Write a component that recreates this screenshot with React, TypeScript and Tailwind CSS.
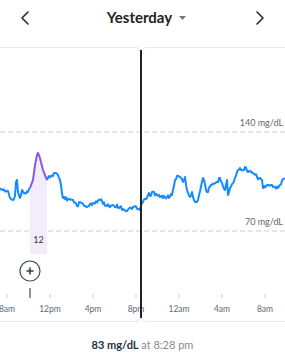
import React from "react";

const blue1: [number, number][] = [[0,188],[3,190],[8,191],[10,198],[13,200],[15,196],[16,182],[17,180],[18,192],[20,198],[22,190],[25,193],[28,192],[30,188]];
const purple: [number, number][] = [[30,188],[33,180],[35,165],[37,155],[38,153],[40,158],[43,170],[47,180]];
const blue2: [number, number][] = [[47,180],[49,176],[53,176],[55,173],[58,175],[60,180],[63,198],[73,200],[77,206],[80,202],[83,204],[87,207],[93,203],[100,200],[107,206],[113,205],[120,207],[127,211],[133,207],[140,210],[143,202],[147,198],[149,193],[150,196],[152,192],[157,195],[160,197],[167,197],[172,195],[175,180],[177,176],[180,177],[183,182],[185,177],[187,190],[190,197],[192,192],[195,202],[198,200],[202,182],[203,178],[207,192],[212,185],[217,182],[220,178],[222,183],[225,190],[227,180],[228,195],[230,188],[233,183],[237,172],[240,168],[243,170],[245,167],[248,172],[253,173],[257,177],[262,180],[263,188],[267,185],[273,187],[278,188],[283,179],[285,178]];

function jit(x: number) {
  const s = Math.sin(x * 12.9898 + 78.233) * 43758.5453;
  return (s - Math.floor(s)) * 2 - 1;
}

function build(keys: [number, number][], amp: number) {
  const pts: [number, number][] = [];
  for (let i = 0; i < keys.length - 1; i++) {
    const [x0, y0] = keys[i];
    const [x1, y1] = keys[i + 1];
    const steps = Math.max(1, Math.round((x1 - x0) / 1));
    for (let s = 0; s < steps; s++) {
      const t = s / steps;
      const x = x0 + (x1 - x0) * t;
      let y = y0 + (y1 - y0) * t;
      if (s !== 0) y += jit(x) * amp;
      pts.push([x, y]);
    }
  }
  pts.push(keys[keys.length - 1]);
  return pts;
}

const toD = (pts: [number, number][]) =>
  pts.map((p, i) => `${i === 0 ? "M" : "L"}${p[0].toFixed(1)},${p[1].toFixed(1)}`).join(" ");

const b1 = build(blue1, 1.5);
const pu = build(purple, 0.4);
const b2 = build(blue2, 1.8);

const ticks = [
  { x: 7, l: "8am" },
  { x: 50, l: "12pm" },
  { x: 93, l: "4pm" },
  { x: 136, l: "8pm" },
  { x: 179, l: "12am" },
  { x: 222, l: "4am" },
  { x: 265, l: "8am" },
];

export default function App() {
  const shade = toD(pu) + " L47,254 L30,254 Z";
  return (
    <div className="w-[285px] h-[354px] bg-white overflow-hidden flex flex-col" style={{ fontFamily: "Lato, 'Noto Sans', sans-serif" }}>
      <div className="h-[47px] flex items-center justify-between px-[19px] pb-[12px] shrink-0">
        <svg width="12" height="16" viewBox="0 0 12 16">
          <path d="M9 2 L3 8 L9 14" fill="none" stroke="#2a2a2a" strokeWidth="1.6" strokeLinecap="round" strokeLinejoin="round" />
        </svg>
        <div className="flex items-center gap-[7px] pl-[8px]">
          <span className="text-[15px] font-bold text-[#222]">Yesterday</span>
          <svg width="7" height="4" viewBox="0 0 7 4"><path d="M0 0 L7 0 L3.5 4 Z" fill="#777" /></svg>
        </div>
        <svg width="12" height="16" viewBox="0 0 12 16">
          <path d="M3 2 L9 8 L3 14" fill="none" stroke="#2a2a2a" strokeWidth="1.6" strokeLinecap="round" strokeLinejoin="round" />
        </svg>
      </div>
      <div className="h-[275px] shrink-0">
        <svg width="285" height="275" viewBox="0 47 285 275" className="block">
          <path d="M0,47.5 L137,47.5 L141,51 L145,47.5 L285,47.5" fill="none" stroke="#ebebeb" strokeWidth="1.2" />
          <path d="M0,321.5 L137,321.5 L141,318 L145,321.5 L285,321.5" fill="none" stroke="#ebebeb" strokeWidth="1.2" />
          <line x1="0" y1="132" x2="285" y2="132" stroke="#cfcfcf" strokeWidth="1" strokeDasharray="5 3" />
          <line x1="0" y1="231" x2="285" y2="231" stroke="#cfcfcf" strokeWidth="1" strokeDasharray="5 3" />
          <text x="283" y="126" textAnchor="end" fontSize="9" fill="#666" fontFamily="Lato, sans-serif">140 mg/dL</text>
          <text x="283" y="225" textAnchor="end" fontSize="9" fill="#666" fontFamily="Lato, sans-serif">70 mg/dL</text>
          <path d={shade} fill="#f3ecfd" />
          <text x="38.5" y="243" textAnchor="middle" fontSize="9" fill="#333" fontFamily="Lato, sans-serif">12</text>
          <path d={toD(b1)} fill="none" stroke="#168bff" strokeWidth="2" strokeLinejoin="round" />
          <path d={toD(b2)} fill="none" stroke="#168bff" strokeWidth="2" strokeLinejoin="round" />
          <path d={toD(pu)} fill="none" stroke="#8a55e0" strokeWidth="2" strokeLinejoin="round" />
          {ticks.map((t) => (
            <g key={t.l + t.x}>
              <line x1={t.x} y1="294" x2={t.x} y2="298" stroke="#d0d0d0" strokeWidth="1" />
              <text x={t.x} y="312" textAnchor="middle" fontSize="8.5" fill="#5b6b77" fontFamily="Lato, sans-serif">{t.l}</text>
            </g>
          ))}
          <line x1="30" y1="288" x2="30" y2="298" stroke="#3d4f5a" strokeWidth="1.2" />
          <circle cx="30" cy="271" r="10" fill="#fff" stroke="#3d4f5a" strokeWidth="1.2" />
          <path d="M30,267.5 L30,274.5 M26.5,271 L33.5,271" stroke="#2c3d48" strokeWidth="1.5" />
          <line x1="141" y1="50" x2="141" y2="318" stroke="#222" strokeWidth="2" />
        </svg>
      </div>
      <div className="flex-1 flex justify-center pt-[16px]">
        <span className="text-[11px] leading-[14px]">
          <span className="font-bold text-[#1f3340]">83 mg/dL</span>
          <span className="text-[#8a8a8a]"> at 8:28 pm</span>
        </span>
      </div>
    </div>
  );
}
